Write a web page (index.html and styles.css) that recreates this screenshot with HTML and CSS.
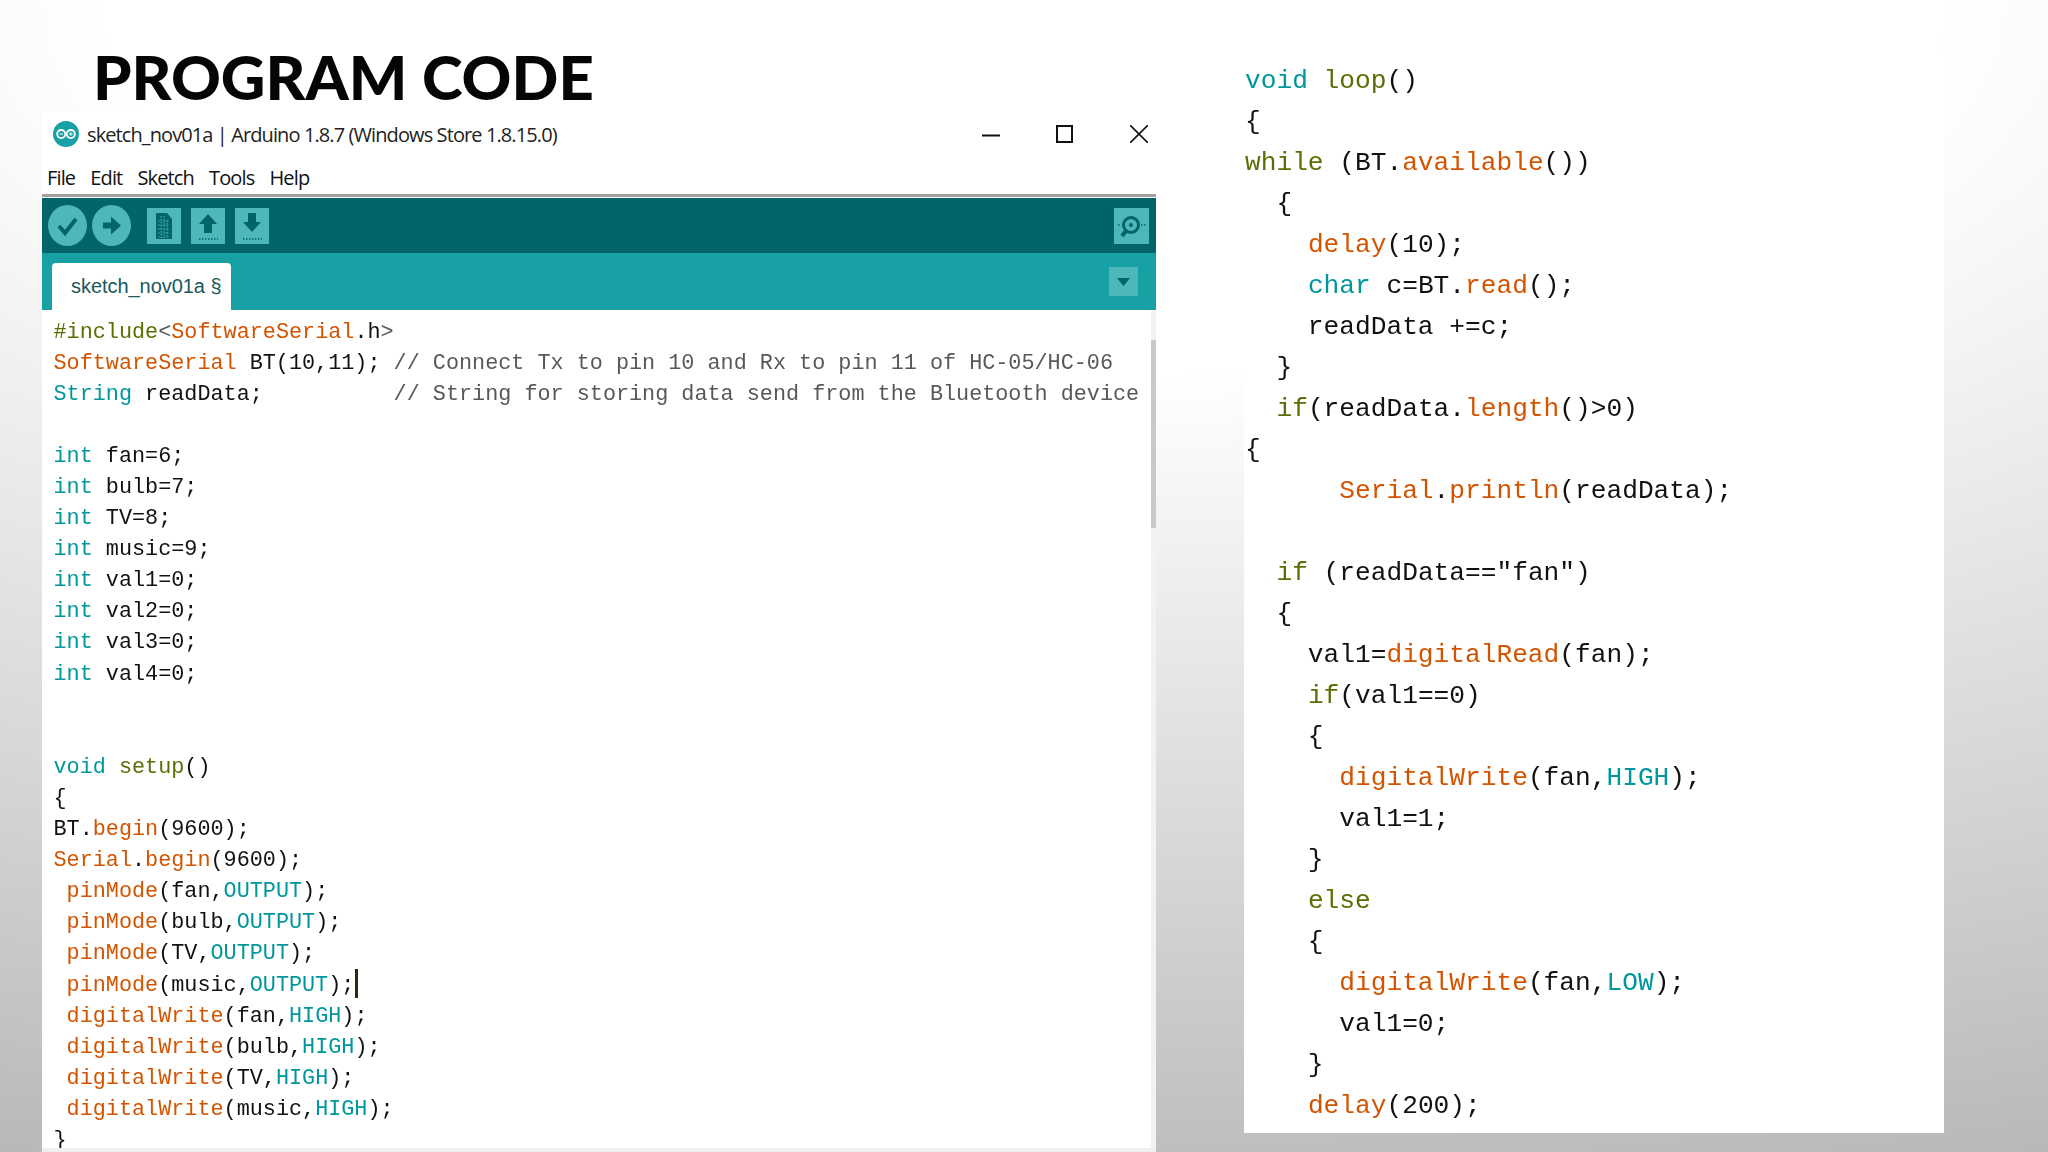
FILE: index.html
```html
<!DOCTYPE html>
<html lang="en">
<head>
    <meta charset="UTF-8">
    <meta name="viewport" content="width=device-width, initial-scale=1.0">
    <title>Program Code</title>
    <link rel="stylesheet" href="styles.css">
</head>
<body>

    <div class="slide">
        <!-- Left column: heading and IDE window -->
        <div class="left">
            <h1>PROGRAM CODE</h1>

            <div class="window">
                <div class="titlebar">
                    <svg class="logo" viewBox="0 0 26 26">
                        <circle cx="13" cy="13" r="13" fill="#17a1a5"/>
                        <circle cx="8.2" cy="13" r="4" fill="none" stroke="#fff" stroke-width="1.8"/>
                        <circle cx="17.8" cy="13" r="4" fill="none" stroke="#fff" stroke-width="1.8"/>
                        <path d="M6.5 13h3.4M16.1 13h3.4M17.8 11.3v3.4" stroke="#fff" stroke-width="1"/>
                    </svg>
                    <span class="title-text">sketch_nov01a | Arduino 1.8.7 (Windows Store 1.8.15.0)</span>
                    <div class="controls">
                        <svg viewBox="0 0 18 18"><path d="M0 10.500h18" stroke="#111" stroke-width="2"/></svg>
                        <svg viewBox="0 0 18 18"><rect x="1" y="1" width="15" height="16" fill="none" stroke="#111" stroke-width="2"/></svg>
                        <svg viewBox="0 0 18 18"><path d="M0 0L18 18M18 0L0 18" stroke="#111" stroke-width="1.600"/></svg>
                    </div>
                </div>

                <div class="menubar">
                    <span>File</span>
                    <span>Edit</span>
                    <span>Sketch</span>
                    <span>Tools</span>
                    <span>Help</span>
                </div>

                <div class="toolbar">
                    <div class="round-btn">
                        <svg viewBox="0 0 39 41"><path d="M11 21l6 7 11-14" fill="none" stroke="#006468" stroke-width="4"/></svg>
                    </div>
                    <div class="round-btn">
                        <svg viewBox="0 0 39 41"><path d="M11 17.500h8v-6l10 9-10 9v-6h-8z" fill="#006468"/></svg>
                    </div>
                    <div class="square-btn first">
                        <svg viewBox="0 0 34 36"><path d="M9 5h11l5 6v20H9z" fill="#006468"/><path d="M11 13h12M11 17h12M11 21h12M11 25h12M11 29h12M14 8v22M17 8v22M20 12v18" stroke="#4db7bb" stroke-width="1" stroke-dasharray="1.500 1.500"/></svg>
                    </div>
                    <div class="square-btn">
                        <svg viewBox="0 0 34 36"><path d="M17 6l9 10h-5v9h-8v-9H8z" fill="#006468"/><path d="M8 31h19" stroke="#006468" stroke-width="1.500" stroke-dasharray="1.500 1.500"/></svg>
                    </div>
                    <div class="square-btn">
                        <svg viewBox="0 0 34 36"><path d="M13 5h8v9h5l-9 10-9-10h5z" fill="#006468"/><path d="M8 31h19" stroke="#006468" stroke-width="1.500" stroke-dasharray="1.500 1.500"/></svg>
                    </div>
                    <div class="square-btn monitor">
                        <svg viewBox="0 0 35 36"><circle cx="17" cy="17" r="7.500" fill="none" stroke="#006468" stroke-width="3"/><circle cx="17" cy="17" r="2" fill="#006468"/><path d="M12 23l-4 5" stroke="#006468" stroke-width="4"/><path d="M4 17h3M27 17h5" stroke="#006468" stroke-width="1.500" stroke-dasharray="1.500 1.500"/></svg>
                    </div>
                </div>

                <div class="tabbar">
                    <div class="tab">sketch_nov01a §</div>
                    <div class="tab-menu">
                        <svg viewBox="0 0 29 29"><path d="M8 11h13l-6.500 8z" fill="#006468"/></svg>
                    </div>
                </div>

                <div class="editor">
                    <div class="code">
                        <div class="line"><span class="c">#include</span><span class="g">&lt;</span><span class="f">SoftwareSerial</span>.h<span class="g">&gt;</span></div>
                        <div class="line"><span class="f">SoftwareSerial</span> BT(10,11); <span class="g">// Connect Tx to pin 10 and Rx to pin 11 of HC-05/HC-06</span></div>
                        <div class="line"><span class="k">String</span> readData;          <span class="g">// String for storing data send from the Bluetooth device</span></div>
                        <div class="line"></div>
                        <div class="line"><span class="k">int</span> fan=6;</div>
                        <div class="line"><span class="k">int</span> bulb=7;</div>
                        <div class="line"><span class="k">int</span> TV=8;</div>
                        <div class="line"><span class="k">int</span> music=9;</div>
                        <div class="line"><span class="k">int</span> val1=0;</div>
                        <div class="line"><span class="k">int</span> val2=0;</div>
                        <div class="line"><span class="k">int</span> val3=0;</div>
                        <div class="line"><span class="k">int</span> val4=0;</div>
                        <div class="line"></div>
                        <div class="line"></div>
                        <div class="line"><span class="k">void</span> <span class="c">setup</span>()</div>
                        <div class="line">{</div>
                        <div class="line">BT.<span class="f">begin</span>(9600);</div>
                        <div class="line"><span class="f">Serial</span>.<span class="f">begin</span>(9600);</div>
                        <div class="line"> <span class="f">pinMode</span>(fan,<span class="k">OUTPUT</span>);</div>
                        <div class="line"> <span class="f">pinMode</span>(bulb,<span class="k">OUTPUT</span>);</div>
                        <div class="line"> <span class="f">pinMode</span>(TV,<span class="k">OUTPUT</span>);</div>
                        <div class="line"> <span class="f">pinMode</span>(music,<span class="k">OUTPUT</span>);<span class="caret"></span></div>
                        <div class="line"> <span class="f">digitalWrite</span>(fan,<span class="k">HIGH</span>);</div>
                        <div class="line"> <span class="f">digitalWrite</span>(bulb,<span class="k">HIGH</span>);</div>
                        <div class="line"> <span class="f">digitalWrite</span>(TV,<span class="k">HIGH</span>);</div>
                        <div class="line"> <span class="f">digitalWrite</span>(music,<span class="k">HIGH</span>);</div>
                        <div class="line">}</div>
                    </div>
                    <div class="scrollbar"><div class="thumb"></div></div>
                </div>
            </div>
        </div>

        <!-- Right column: rest of the sketch -->
        <div class="panel">
            <div class="code-big">
                <div class="line"><span class="k">void</span> <span class="c">loop</span>()</div>
                <div class="line">{</div>
                <div class="line"><span class="c">while</span> (BT.<span class="f">available</span>())</div>
                <div class="line">  {</div>
                <div class="line">    <span class="f">delay</span>(10);</div>
                <div class="line">    <span class="k">char</span> c=BT.<span class="f">read</span>();</div>
                <div class="line">    readData +=c;</div>
                <div class="line">  }</div>
                <div class="line">  <span class="c">if</span>(readData.<span class="f">length</span>()&gt;0)</div>
                <div class="line">{</div>
                <div class="line">      <span class="f">Serial</span>.<span class="f">println</span>(readData);</div>
                <div class="line"></div>
                <div class="line">  <span class="c">if</span> (readData=="fan")</div>
                <div class="line">  {</div>
                <div class="line">    val1=<span class="f">digitalRead</span>(fan);</div>
                <div class="line">    <span class="c">if</span>(val1==0)</div>
                <div class="line">    {</div>
                <div class="line">      <span class="f">digitalWrite</span>(fan,<span class="k">HIGH</span>);</div>
                <div class="line">      val1=1;</div>
                <div class="line">    }</div>
                <div class="line">    <span class="c">else</span></div>
                <div class="line">    {</div>
                <div class="line">      <span class="f">digitalWrite</span>(fan,<span class="k">LOW</span>);</div>
                <div class="line">      val1=0;</div>
                <div class="line">    }</div>
                <div class="line">    <span class="f">delay</span>(200);</div>
            </div>
        </div>
    </div>

</body>
</html>
```

FILE: styles.css
```css
* {
    margin: 0;
    padding: 0;
    box-sizing: border-box;
}

body {
    width: 2048px;
    height: 1152px;
    overflow: hidden;
    background: #fff;
}

.slide {
    display: flex;
    width: 2048px;
    height: 1152px;
    background: radial-gradient(ellipse 150% 110% at 50% 0, #fff 30%, #b5b5b5 100%);
}

.left {
    display: flex;
    flex-direction: column;
    width: 1114px;
    margin-left: 42px;
}

h1 {
    height: 112px;
    padding: 37px 0 0 51px;
    font-family: 'Lato', sans-serif;
    font-size: 61.6px;
    font-weight: 900;
    line-height: 78px;
    color: #050505;
}

/* IDE window */
.window {
    flex: 1;
    display: flex;
    flex-direction: column;
    min-height: 0;
    background: #fff;
    border-bottom: 4px solid #efefef;
}

.titlebar {
    display: flex;
    align-items: center;
    height: 44px;
    flex-shrink: 0;
    padding-left: 11px;
}

.logo {
    width: 26px;
    height: 26px;
    margin-right: 8px;
}

.title-text {
    font-family: 'Open Sans', sans-serif;
    font-size: 20px;
    letter-spacing: -0.9px;
    color: #222;
}

.controls {
    display: flex;
    gap: 56px;
    margin-left: auto;
    margin-right: 8px;
}

.controls svg {
    width: 18px;
    height: 18px;
}

.menubar {
    display: flex;
    gap: 15px;
    height: 41px;
    flex-shrink: 0;
    padding: 8px 0 0 5px;
    font-family: 'Open Sans', sans-serif;
    font-size: 20px;
    line-height: 27px;
    letter-spacing: -0.85px;
    color: #111;
    border-bottom: 3px solid #a2a2a2;
}

.toolbar {
    display: flex;
    align-items: center;
    gap: 5px;
    height: 55px;
    flex-shrink: 0;
    margin-top: 1px;
    padding-left: 6px;
    background: #006468;
}

.round-btn {
    width: 39px;
    height: 41px;
    border-radius: 50%;
    background: #4db7bb;
}

.round-btn svg,
.square-btn svg,
.tab-menu svg {
    display: block;
    width: 100%;
    height: 100%;
}

.square-btn {
    width: 34px;
    height: 36px;
    margin-left: 5px;
    background: #4db7bb;
}

.square-btn.first {
    margin-left: 11px;
}

.square-btn.monitor {
    width: 35px;
    margin-left: auto;
    margin-right: 7px;
}

.tabbar {
    display: flex;
    align-items: flex-end;
    height: 57px;
    flex-shrink: 0;
    padding-left: 10px;
    background: #17a1a5;
}

.tab {
    width: 179px;
    height: 47px;
    padding: 10px 0 0 19px;
    border-radius: 4px 4px 0 0;
    background: #fff;
    font-family: 'Liberation Sans', sans-serif;
    font-size: 20px;
    line-height: 27px;
    letter-spacing: -0.05px;
    color: #17595c;
}

.tab-menu {
    width: 29px;
    height: 29px;
    margin: 0 18px 14px auto;
    background: #4db7bb;
}

.editor {
    position: relative;
    flex: 1;
    min-height: 0;
    overflow: hidden;
    padding: 6.5px 0 0 11.5px;
}

.code {
    font-family: 'Liberation Mono', monospace;
    font-size: 21.8px;
    color: #111;
    filter: blur(0.4px);
}

.code .line {
    height: 31.1px;
    line-height: 31.1px;
    white-space: pre;
}

.scrollbar {
    position: absolute;
    top: 0;
    right: 0;
    bottom: 0;
    width: 5px;
    background: #f2f2f2;
}

.thumb {
    height: 188px;
    margin-top: 30px;
    background: #c9c9c9;
}

.caret {
    display: inline-block;
    width: 3px;
    height: 29px;
    margin-left: 1px;
    vertical-align: -7px;
    background: #2a2a12;
}

/* Right hand code image */
.panel {
    width: 700px;
    height: 1083px;
    margin: 50px 0 0 88px;
    padding: 11px 0 0 1px;
    background: #fff;
}

.code-big {
    font-family: 'Liberation Mono', monospace;
    font-size: 26.2px;
    color: #111;
    filter: blur(0.4px);
}

.code-big .line {
    height: 41px;
    line-height: 41px;
    white-space: pre;
}

.k { color: #00979c; }
.f { color: #d35400; }
.c { color: #5e6d03; }
.g { color: #56595b; }
```
